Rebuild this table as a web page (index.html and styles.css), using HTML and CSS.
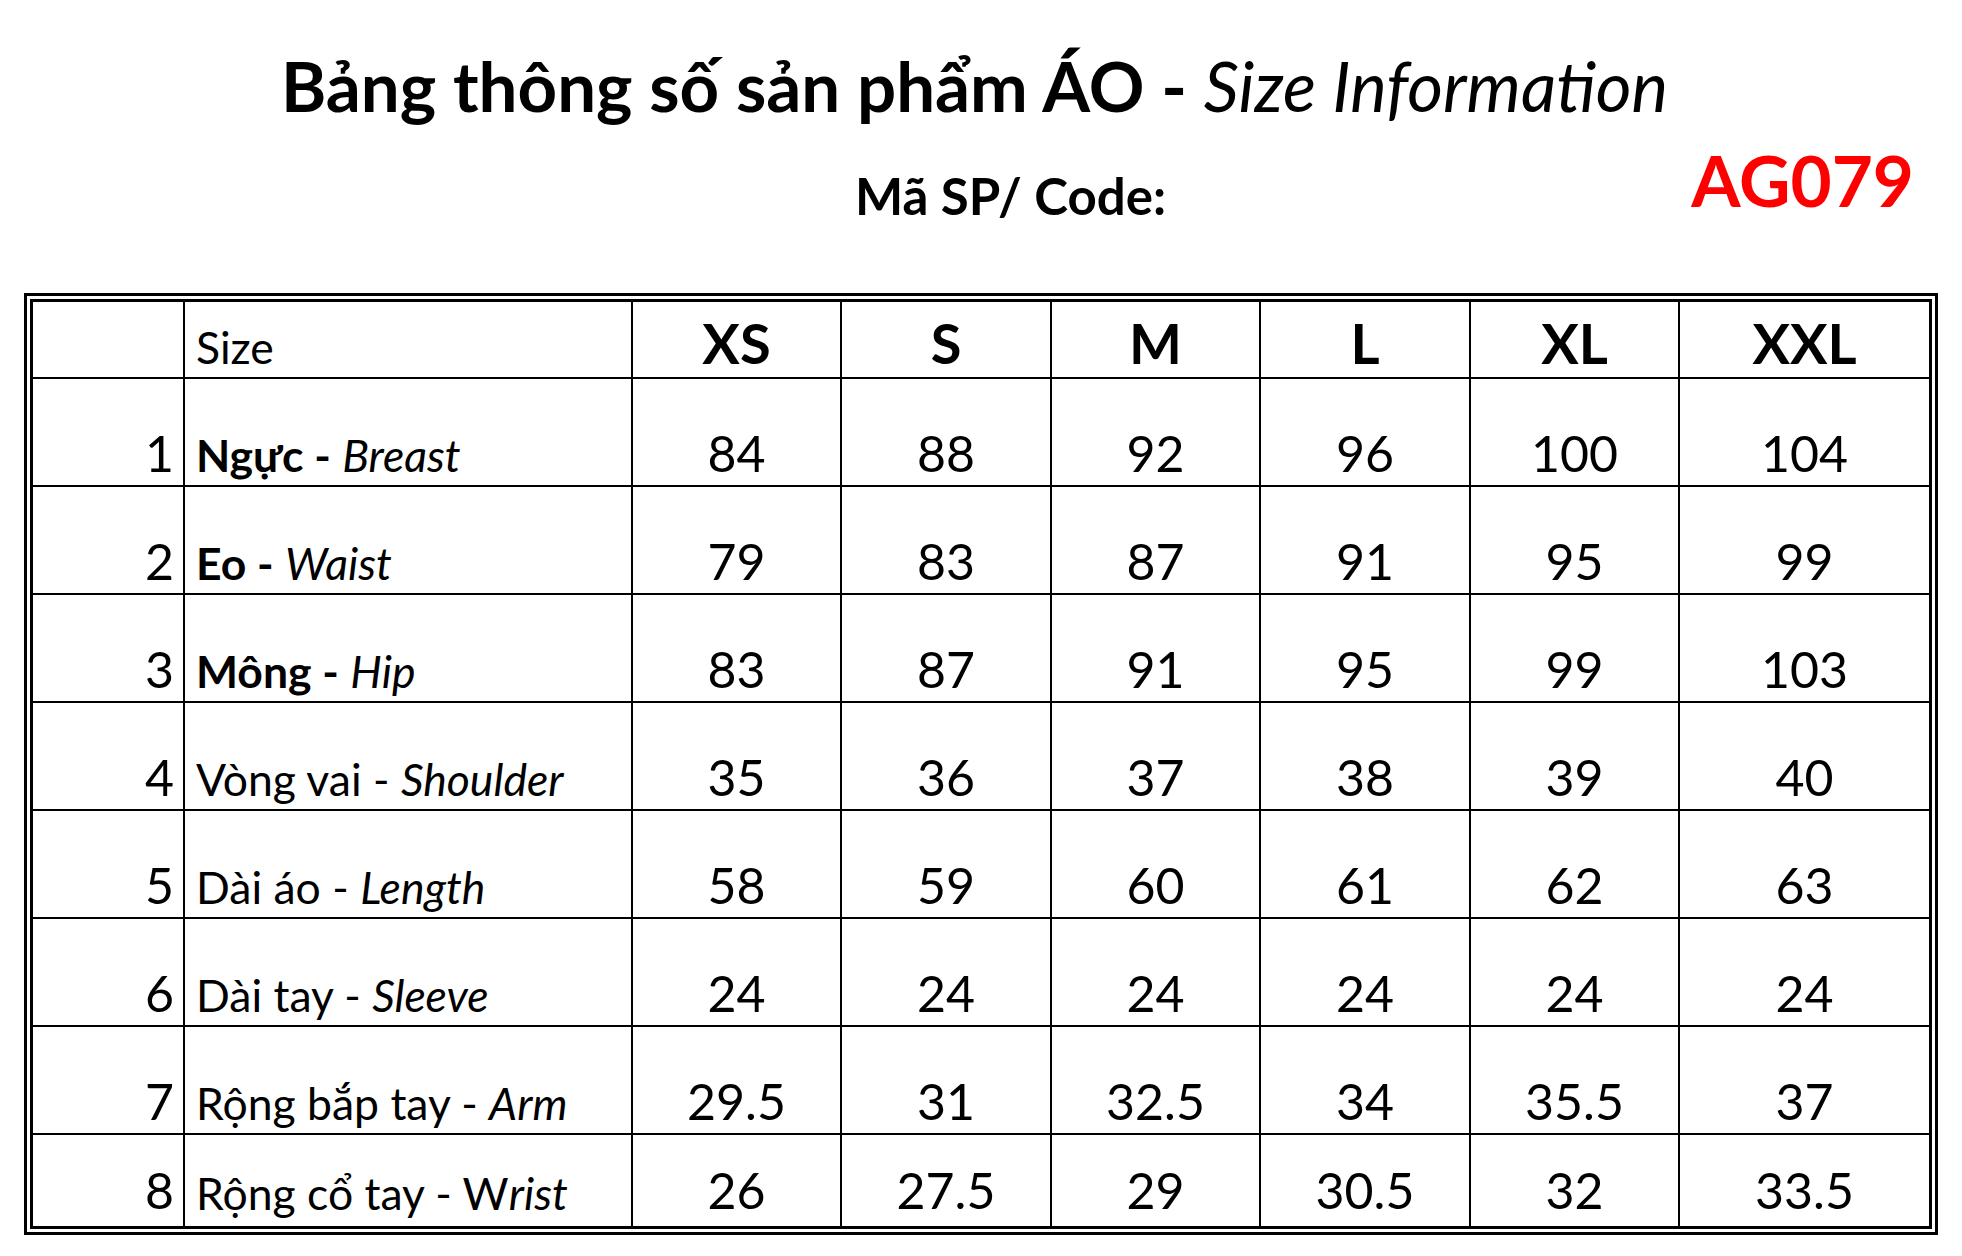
FILE: index.html
```html
<!DOCTYPE html>
<html lang="vi">
<head>
<meta charset="utf-8">
<title>Bảng thông số sản phẩm ÁO - Size Information</title>
<link rel="stylesheet" href="styles.css">
</head>
<body>
<div class="sheet">
  <h1 class="title">Bảng thông số sản phẩm ÁO - <i>Size Information</i></h1>
  <div class="code-row">
    <span class="code-label">Mã SP/ Code:</span>
    <span class="code-value">AG079</span>
  </div>
  <div class="frame">
    <div class="grid">
      <div class="c hd-blank"></div>
      <div class="c lbl hd-size">Size</div>
      <div class="c hd">XS</div>
      <div class="c hd">S</div>
      <div class="c hd">M</div>
      <div class="c hd">L</div>
      <div class="c hd">XL</div>
      <div class="c hd">XXL</div>

      <div class="c num">1</div>
      <div class="c lbl"><b>Ngực -</b>&nbsp;<i>Breast</i></div>
      <div class="c val">84</div><div class="c val">88</div><div class="c val">92</div><div class="c val">96</div><div class="c val">100</div><div class="c val">104</div>

      <div class="c num">2</div>
      <div class="c lbl"><b>Eo -</b>&nbsp;<i>Waist</i></div>
      <div class="c val">79</div><div class="c val">83</div><div class="c val">87</div><div class="c val">91</div><div class="c val">95</div><div class="c val">99</div>

      <div class="c num">3</div>
      <div class="c lbl"><b>Mông -</b>&nbsp;<i>Hip</i></div>
      <div class="c val">83</div><div class="c val">87</div><div class="c val">91</div><div class="c val">95</div><div class="c val">99</div><div class="c val">103</div>

      <div class="c num">4</div>
      <div class="c lbl">Vòng vai -&nbsp;<i>Shoulder</i></div>
      <div class="c val">35</div><div class="c val">36</div><div class="c val">37</div><div class="c val">38</div><div class="c val">39</div><div class="c val">40</div>

      <div class="c num">5</div>
      <div class="c lbl">Dài áo -&nbsp;<i>Length</i></div>
      <div class="c val">58</div><div class="c val">59</div><div class="c val">60</div><div class="c val">61</div><div class="c val">62</div><div class="c val">63</div>

      <div class="c num">6</div>
      <div class="c lbl">Dài tay -&nbsp;<i>Sleeve</i></div>
      <div class="c val">24</div><div class="c val">24</div><div class="c val">24</div><div class="c val">24</div><div class="c val">24</div><div class="c val">24</div>

      <div class="c num">7</div>
      <div class="c lbl">Rộng bắp tay -&nbsp;<i>Arm</i></div>
      <div class="c val">29.5</div><div class="c val">31</div><div class="c val">32.5</div><div class="c val">34</div><div class="c val">35.5</div><div class="c val">37</div>

      <div class="c num last">8</div>
      <div class="c lbl last">Rộng cổ tay - W<i>rist</i></div>
      <div class="c val last">26</div><div class="c val last">27.5</div><div class="c val last">29</div><div class="c val last">30.5</div><div class="c val last">32</div><div class="c val last">33.5</div>
    </div>
  </div>
</div>
</body>
</html>
```
FILE: styles.css
```css
html, body {
  margin: 0;
  padding: 0;
  background: #ffffff;
}
body {
  width: 1962px;
  height: 1256px;
  overflow: hidden;
  font-family: Lato, "Open Sans", "Noto Sans", sans-serif;
  color: #000000;
}
.sheet {
  padding-top: 46px;
}
.title {
  margin: 0;
  font-size: 69px;
  font-weight: 700;
  line-height: 80px;
  height: 80px;
  text-align: center;
  padding-right: 13px;
  white-space: nowrap;
}
.title i {
  font-weight: 400;
}
.code-row {
  display: flex;
  justify-content: space-between;
  align-items: flex-start;
  margin-top: 7px;
  height: 94px;
  padding-left: 855px;
  padding-right: 48px;
}
.code-label {
  margin-top: 33px;
  font-size: 51px;
  font-weight: 700;
  line-height: 60px;
}
.code-value {
  margin-top: 4px;
  font-size: 71px;
  font-weight: 700;
  line-height: 86px;
  color: #ff0000;
}
.frame {
  margin-top: 66px;
  margin-left: 24px;
  width: 1914px;
  box-sizing: border-box;
  border: 3px solid #000;
  padding: 3px;
  background: #fff;
}
.grid {
  display: grid;
  grid-template-columns: 150px 446px 207px 208px 207px 208px 207px 249px;
  grid-template-rows: 75px repeat(7, 106px) 91px;
  gap: 2px;
  padding: 3px;
  background: #000;
}
.c {
  background: #fff;
  display: flex;
  align-items: flex-end;
  line-height: 1;
  white-space: nowrap;
  overflow: hidden;
}
.hd {
  justify-content: center;
  font-size: 56px;
  font-weight: 700;
  padding-bottom: 6px;
}
.lbl {
  font-size: 44.5px;
  padding-left: 11px;
  padding-bottom: 8px;
}
.lbl b {
  font-weight: 700;
}
.num {
  justify-content: flex-end;
  font-size: 50px;
  padding-right: 9px;
  padding-bottom: 7px;
}
.val {
  justify-content: center;
  font-size: 50px;
  padding-bottom: 7px;
}
.c.last {
  padding-bottom: 11px;
}
```
